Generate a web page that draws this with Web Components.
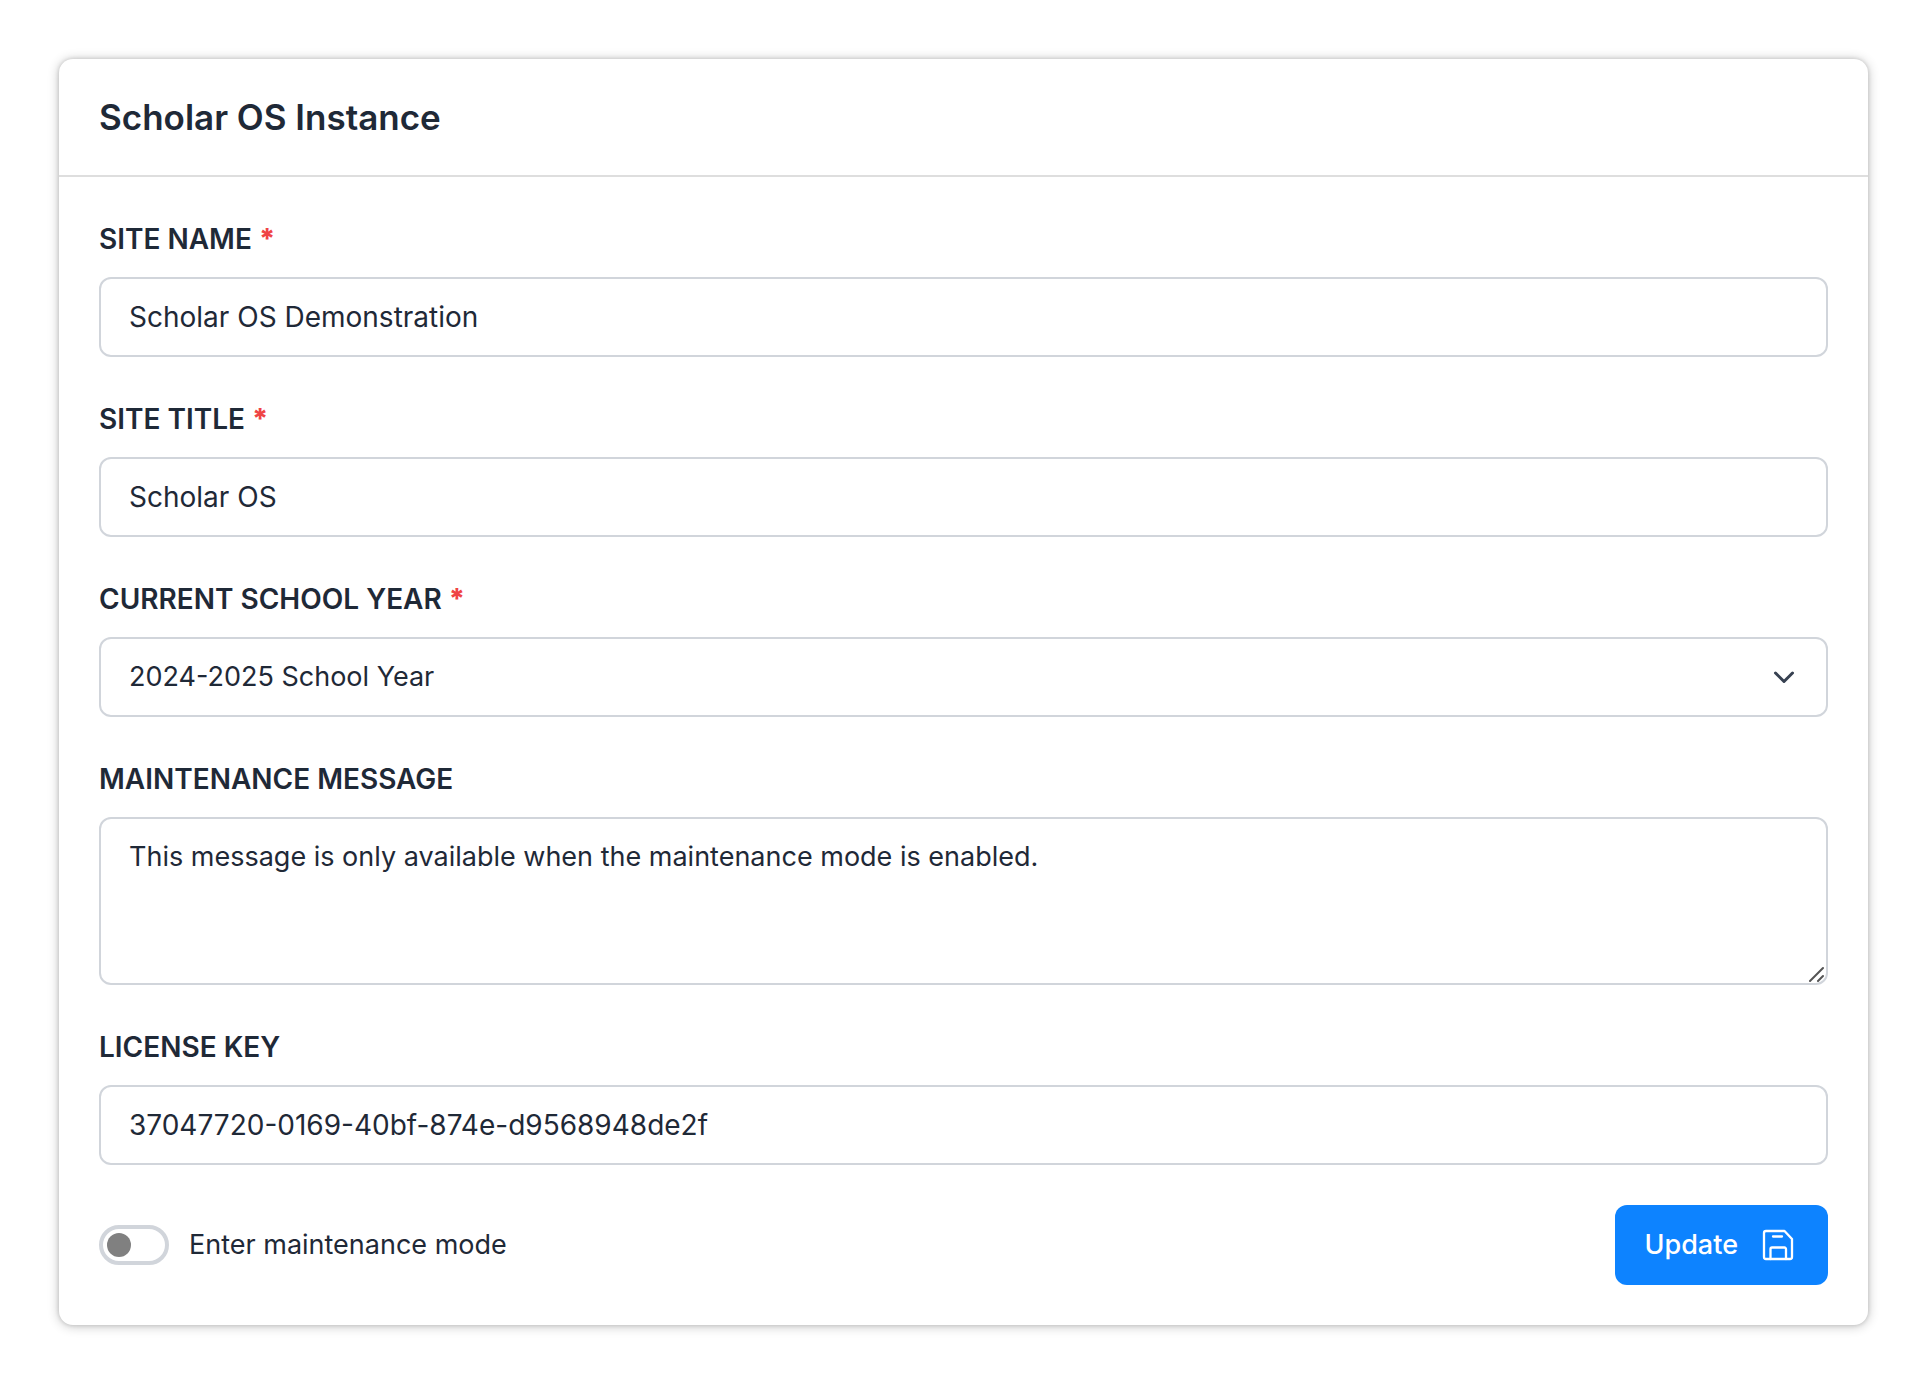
<!DOCTYPE html>
<html lang="en">
<head>
<meta charset="utf-8">
<meta name="viewport" content="width=device-width, initial-scale=1">
<title>Scholar OS Instance</title>
<style>
  body {
    margin: 0;
    padding: 59px;
    background: #fff;
    color: #1f2937;
    font-family: Inter, "Liberation Sans", sans-serif;
    font-size: 27px;
    line-height: 40px;
  }
</style>
</head>
<body>
<settings-card heading="Scholar OS Instance">
  <text-field label="SITE NAME" value="Scholar OS Demonstration" required></text-field>
  <text-field label="SITE TITLE" value="Scholar OS" required></text-field>
  <select-field label="CURRENT SCHOOL YEAR" value="2024-2025 School Year" required></select-field>
  <message-field label="MAINTENANCE MESSAGE" value="This message is only available when the maintenance mode is enabled."></message-field>
  <text-field label="LICENSE KEY" value="37047720-0169-40bf-874e-d9568948de2f"></text-field>
  <form-actions>
    <toggle-switch>Enter maintenance mode</toggle-switch>
    <save-button slot="end">Update</save-button>
  </form-actions>
</settings-card>

<script>
  class SettingsCard extends HTMLElement {
    connectedCallback() {
      this.attachShadow({ mode: "open" }).innerHTML = `
        <style>
          :host { display: block; border-radius: 14px; background: #fff;
            box-shadow: 0 0 4px rgba(0,0,0,.16), 0 1px 12px rgba(0,0,0,.24); }
          header { padding: 36px 40px; border-bottom: 2px solid #dedede; }
          h1 { margin: 0; font-size: 35px; line-height: 44px; font-weight: 600; }
          .body { display: flex; flex-direction: column; gap: 40px; padding: 40px; }
        </style>
        <header><h1></h1></header>
        <div class="body"><slot></slot></div>`;
      this.shadowRoot.querySelector("h1").textContent = this.getAttribute("heading");
    }
  }

  const fieldStyle = `
    :host { display: flex; flex-direction: column; gap: 16px; }
    label { font-size: 28px; font-weight: 600; line-height: 44px; }
    .star { color: #ef4444; font-weight: 800; }
    .box { position: relative; display: flex; }
    input, select, textarea {
      box-sizing: border-box; width: 100%; margin: 0; padding: 18px 28px;
      border: 2px solid #d1d5db; border-radius: 12px; outline: none;
      background: #fff; color: inherit; font: inherit; appearance: none; }
    input { font-size: 28px; }
    input, select { height: 80px; }
    textarea { display: block; resize: none; overflow: hidden; padding-bottom: 26px; }
    svg { position: absolute; pointer-events: none; fill: none; stroke-linecap: round; stroke-linejoin: round; }
    .chevron { right: 24px; top: 20px; stroke: #374151; stroke-width: 3; }
    .grip { right: 4px; bottom: 3px; stroke: #555; stroke-width: 2; }`;

  class FormField extends HTMLElement {
    connectedCallback() {
      this.attachShadow({ mode: "open" }).innerHTML = `
        <style>${fieldStyle}</style>
        <label for="control"><span class="name"></span></label>
        <div class="box">${this.control()}</div>`;
      const root = this.shadowRoot;
      root.querySelector(".name").textContent = this.getAttribute("label");
      if (this.hasAttribute("required")) {
        root.querySelector("label").insertAdjacentHTML("beforeend", ' <span class="star">*</span>');
      }
      this.fill(root.getElementById("control"), this.getAttribute("value"));
    }
    fill(control, value) { control.value = value; }
  }

  class TextField extends FormField {
    control() { return `<input id="control" type="text">`; }
  }

  class SelectField extends FormField {
    control() {
      return `<select id="control"></select>
        <svg class="chevron" width="40" height="40" viewBox="0 0 40 40" aria-hidden="true"><path d="M11.500 16l8.500 8.500l8.500-8.500"/></svg>`;
    }
    fill(control, value) { control.add(new Option(value, value, true, true)); }
  }

  class MessageField extends FormField {
    control() {
      return `<textarea id="control" rows="3"></textarea>
        <svg class="grip" width="16" height="16" viewBox="0 0 16 16" aria-hidden="true"><path d="M2 15L15 2M10 15l5-5"/></svg>`;
    }
  }

  class FormActions extends HTMLElement {
    connectedCallback() {
      this.attachShadow({ mode: "open" }).innerHTML = `
        <style>:host { display: flex; align-items: center; justify-content: space-between; gap: 40px; }</style>
        <slot></slot><slot name="end"></slot>`;
    }
  }

  class ToggleSwitch extends HTMLElement {
    connectedCallback() {
      this.attachShadow({ mode: "open" }).innerHTML = `
        <style>
          :host { display: block; }
          label { display: flex; align-items: center; gap: 20px; }
          input { appearance: none; box-sizing: border-box; flex: none; width: 70px; height: 40px; margin: 0;
            padding: 4px; border: 4px solid #d1d5db; border-radius: 20px; background: #fff; }
          input::before { content: ""; display: block; width: 24px; height: 24px; border-radius: 50%; background: #808080; }
          input:checked::before { margin-left: auto; background: #0d83ff; }
        </style>
        <label><input type="checkbox" role="switch"><span><slot></slot></span></label>`;
    }
  }

  class SaveButton extends HTMLElement {
    connectedCallback() {
      this.attachShadow({ mode: "open" }).innerHTML = `
        <style>
          :host { display: block; }
          button { display: flex; align-items: center; gap: 20px; margin: 0; padding: 20px 30px; border: 0;
            border-radius: 12px; background: #0d83ff; color: #fff; font: inherit; font-weight: 500; }
          svg { flex: none; fill: none; stroke: #fff; stroke-width: 2.3; stroke-linecap: round; stroke-linejoin: round; }
        </style>
        <button type="button"><slot></slot>
          <svg width="40" height="40" viewBox="0 0 40 40" aria-hidden="true">
            <path d="M8 6h18.500l7.500 8v18a2 2 0 0 1-2 2H8a2 2 0 0 1-2-2V8a2 2 0 0 1 2-2z"/>
            <path d="M12.500 34V24a1.500 1.500 0 0 1 1.500-1.500h12.500a1.500 1.500 0 0 1 1.500 1.500v10M15 11.500h9"/>
          </svg>
        </button>`;
    }
  }

  customElements.define("settings-card", SettingsCard);
  customElements.define("text-field", TextField);
  customElements.define("select-field", SelectField);
  customElements.define("message-field", MessageField);
  customElements.define("form-actions", FormActions);
  customElements.define("toggle-switch", ToggleSwitch);
  customElements.define("save-button", SaveButton);
</script>
</body>
</html>
